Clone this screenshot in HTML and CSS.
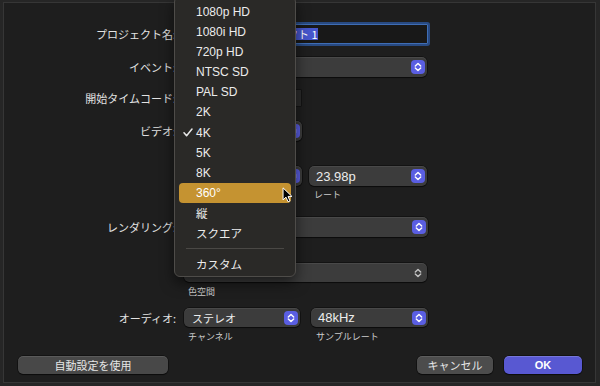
FILE: index.html
```html
<!DOCTYPE html>
<html lang="ja">
<head>
<meta charset="utf-8">
<link rel="stylesheet" href="styles.css">
</head>
<body>
<div class="sheet">
  <div class="row r-name">
    <div class="label">プロジェクト名:</div>
    <div class="ctrls"><div class="field name-field"><span class="sel">名称未設定プロジェクト 1</span></div></div>
  </div>
  <div class="row r-event">
    <div class="label">イベント:</div>
    <div class="ctrls"><div class="popup w243"><span class="val"></span><svg class="step" viewBox="0 0 14 14"><rect width="14" height="14" rx="4"/><polyline points="4.3,6 7,3.4 9.7,6"/><polyline points="4.3,8 7,10.6 9.7,8"/></svg></div></div>
  </div>
  <div class="row r-tc">
    <div class="label">開始タイムコード:</div>
    <div class="ctrls"><div class="field tc-field"></div></div>
  </div>
  <div class="row r-video">
    <div class="label">ビデオ:</div>
    <div class="ctrls"><div class="popup w118"><span class="val"></span><svg class="step" viewBox="0 0 14 14"><rect width="14" height="14" rx="4"/><polyline points="4.3,6 7,3.4 9.7,6"/><polyline points="4.3,8 7,10.6 9.7,8"/></svg></div></div>
  </div>
  <div class="row r-format">
    <div class="label"></div>
    <div class="ctrls gap7">
      <div class="popup w118"><span class="val"></span><svg class="step" viewBox="0 0 14 14"><rect width="14" height="14" rx="4"/><polyline points="4.3,6 7,3.4 9.7,6"/><polyline points="4.3,8 7,10.6 9.7,8"/></svg></div>
      <div class="popup w118"><span class="val">23.98p</span><svg class="step" viewBox="0 0 14 14"><rect width="14" height="14" rx="4"/><polyline points="4.3,6 7,3.4 9.7,6"/><polyline points="4.3,8 7,10.6 9.7,8"/></svg></div>
    </div>
  </div>
  <div class="row sub s-format">
    <div></div>
    <div class="ctrls gap7"><span class="subl w118"></span><span class="subl p5">レート</span></div>
  </div>
  <div class="row r-render">
    <div class="label">レンダリング:</div>
    <div class="ctrls"><div class="popup w244"><span class="val"></span><svg class="step" viewBox="0 0 14 14"><rect width="14" height="14" rx="4"/><polyline points="4.3,6 7,3.4 9.7,6"/><polyline points="4.3,8 7,10.6 9.7,8"/></svg></div></div>
  </div>
  <div class="row r-color">
    <div class="label"></div>
    <div class="ctrls"><div class="popup w243 h19"><span class="val"></span><svg class="step plain" viewBox="0 0 14 14"><polyline points="4.3,6 7,3.4 9.7,6"/><polyline points="4.3,8 7,10.6 9.7,8"/></svg></div></div>
  </div>
  <div class="row sub s-color">
    <div></div>
    <div class="ctrls"><span class="subl p4">色空間</span></div>
  </div>
  <div class="row r-audio">
    <div class="label">オーディオ:</div>
    <div class="ctrls gap11">
      <div class="popup w116 h19"><span class="val ja">ステレオ</span><svg class="step" viewBox="0 0 14 14"><rect width="14" height="14" rx="4"/><polyline points="4.3,6 7,3.4 9.7,6"/><polyline points="4.3,8 7,10.6 9.7,8"/></svg></div>
      <div class="popup w117 h19"><span class="val">48kHz</span><svg class="step" viewBox="0 0 14 14"><rect width="14" height="14" rx="4"/><polyline points="4.3,6 7,3.4 9.7,6"/><polyline points="4.3,8 7,10.6 9.7,8"/></svg></div>
    </div>
  </div>
  <div class="row sub s-audio">
    <div></div>
    <div class="ctrls gap11"><span class="subl w116 p4">チャンネル</span><span class="subl p5">サンプルレート</span></div>
  </div>
  <div class="buttons">
    <div class="btn b-auto">自動設定を使用</div>
    <div class="btn-group">
      <div class="btn b-cancel">キャンセル</div>
      <div class="btn b-ok">OK</div>
    </div>
  </div>
</div>

<div class="menu">
  <div class="item">1080p HD</div>
  <div class="item">1080i HD</div>
  <div class="item">720p HD</div>
  <div class="item">NTSC SD</div>
  <div class="item">PAL SD</div>
  <div class="item">2K</div>
  <div class="item"><svg class="check" viewBox="0 0 10 9"><polyline points="1,4.8 3.6,7.8 9,1"/></svg>4K</div>
  <div class="item">5K</div>
  <div class="item">8K</div>
  <div class="item hl">360°</div>
  <div class="item ja">縦</div>
  <div class="item ja">スクエア</div>
  <div class="sep"></div>
  <div class="item ja">カスタム</div>
</div>

<svg class="cursor" viewBox="0 0 12 18"><path d="M1 1 L1 14.5 L4.3 11.4 L6.6 16.6 L8.8 15.7 L6.6 10.6 L11 10.6 Z"/></svg>
</body>
</html>
```

FILE: styles.css
```css
* { box-sizing: border-box; margin: 0; padding: 0; }

html, body { width: 600px; height: 386px; overflow: hidden; }

body {
  background: #262626;
  padding: 2px 0 0 3px;
  font-family: "Liberation Sans", "Noto Sans CJK JP", sans-serif;
  color: #e4e4e4;
  position: relative;
}

.sheet {
  width: 593px;
  height: 381px;
  background: #1e1e1e;
  border: 1px solid #363636;
  display: flex;
  flex-direction: column;
}

.row {
  display: grid;
  grid-template-columns: 172px 1fr;
  column-gap: 8px;
  align-items: center;
}

.label {
  font-family: "Noto Sans CJK JP", sans-serif;
  font-size: 11px;
  text-align: right;
  color: #e2e2e2;
  white-space: nowrap;
}

.ctrls { display: flex; align-items: center; }
.gap7 { gap: 7px; }
.gap11 { gap: 11px; }

.r-name { margin-top: 21px; }
.r-event { margin-top: 13px; }
.r-tc { margin-top: 12px; }
.r-video { margin-top: 14px; }
.r-format { margin-top: 25px; }
.s-format { margin-top: 2px; }
.r-render { margin-top: 15px; }
.r-color { margin-top: 26px; }
.s-color { margin-top: 3px; }
.r-audio { margin-top: 9px; }
.s-audio { margin-top: 3px; }

.field {
  height: 20px;
  border-radius: 1px;
}

.name-field {
  width: 244px;
  background: #181818;
  border: 1px solid #3f6db4;
  box-shadow: 0 0 0 2px #284a82;
  display: flex;
  align-items: center;
  padding-left: 3px;
}

.sel {
  font-family: "Noto Sans CJK JP", sans-serif;
  font-size: 11px;
  line-height: 12px;
  background: #4656cc;
  color: #ffffff;
  white-space: nowrap;
}

.tc-field {
  width: 118px;
  height: 18px;
  background: #2b2b2b;
  border: 1px solid #141414;
}

.popup {
  height: 20px;
  border-radius: 5px;
  background: #3c3c3c;
  box-shadow: inset 0 1px 0 rgba(255, 255, 255, 0.07), 0 0 0 0.5px rgba(0, 0, 0, 0.7), 0 1px 1px rgba(0, 0, 0, 0.4);
  display: flex;
  align-items: center;
  justify-content: space-between;
  padding: 0 2px 0 7px;
  font-size: 13px;
  color: #ececec;
  white-space: nowrap;
}

.h19 { height: 19px; }
.w116 { width: 116px; }
.w117 { width: 117px; }
.w118 { width: 118px; }
.w243 { width: 243px; }
.w244 { width: 244px; }

.val.ja {
  font-family: "Noto Sans CJK JP", sans-serif;
  font-size: 11px;
  padding-left: 1px;
}

.step {
  width: 14px;
  height: 14px;
  flex: none;
}
.step rect { fill: #5a5ee2; }
.step polyline {
  fill: none;
  stroke: #ffffff;
  stroke-width: 1.4;
  stroke-linecap: round;
  stroke-linejoin: round;
}
.step.plain polyline { stroke: #c4c4c4; }

.sub { height: 14px; }
.subl {
  font-family: "Noto Sans CJK JP", sans-serif;
  font-size: 9px;
  line-height: 14px;
  color: #cdcdcd;
  white-space: nowrap;
}
.subl.w118 { width: 118px; }
.subl.w116 { width: 116px; }
.p4 { padding-left: 4px; }
.p5 { padding-left: 5px; }

.buttons {
  margin-top: 11.5px;
  display: flex;
  justify-content: space-between;
  padding: 0 13px 0 14px;
}

.btn-group { display: flex; gap: 11px; }

.btn {
  height: 18px;
  border-radius: 5px;
  background: #484848;
  box-shadow: inset 0 1px 0 rgba(255, 255, 255, 0.1), 0 0 0 0.5px rgba(0, 0, 0, 0.7), 0 1px 1px rgba(0, 0, 0, 0.4);
  display: flex;
  align-items: center;
  justify-content: center;
  font-family: "Noto Sans CJK JP", sans-serif;
  font-size: 11px;
  color: #e6e6e6;
}
.b-auto { width: 150px; }
.b-cancel { width: 76px; background: #4c4c4c; }
.b-ok {
  width: 78px;
  background: #5858d2;
  font-family: "Liberation Sans", sans-serif;
  font-weight: bold;
  font-size: 11px;
  color: #ffffff;
  box-shadow: inset 0 1px 0 rgba(255, 255, 255, 0.18), 0 0 0 0.5px rgba(0, 0, 0, 0.7), 0 1px 1px rgba(0, 0, 0, 0.4);
}

.menu {
  position: absolute;
  left: 174px;
  top: -4px;
  width: 122px;
  height: 281px;
  background: #2a2927;
  border: 1px solid #4e4c49;
  border-radius: 6px;
  box-shadow: 0 6px 14px rgba(0, 0, 0, 0.55);
  padding: 4.6px 4px 0;
  z-index: 5;
}

.item {
  position: relative;
  height: 20.15px;
  display: flex;
  align-items: center;
  padding-left: 17px;
  border-radius: 4px;
  font-size: 12px;
  color: #ececec;
  white-space: nowrap;
}
.item.ja {
  font-family: "Noto Sans CJK JP", sans-serif;
  font-size: 11.5px;
}
.item.hl {
  background: #c59331;
  color: #ffffff;
}

.check {
  position: absolute;
  left: 4px;
  top: 6px;
  width: 10px;
  height: 9px;
}
.check polyline {
  fill: none;
  stroke: #e8e8e8;
  stroke-width: 1.5;
  stroke-linecap: round;
  stroke-linejoin: round;
}

.sep {
  height: 10.6px;
  display: flex;
  align-items: center;
  padding: 0 7px;
}
.sep::after {
  content: "";
  flex: 1;
  height: 1px;
  background: #4a4845;
}

.cursor {
  position: absolute;
  left: 282px;
  top: 187px;
  width: 11px;
  height: 16px;
  z-index: 6;
}
.cursor path {
  fill: #000000;
  stroke: #ffffff;
  stroke-width: 1.1;
  stroke-linejoin: round;
}
```
